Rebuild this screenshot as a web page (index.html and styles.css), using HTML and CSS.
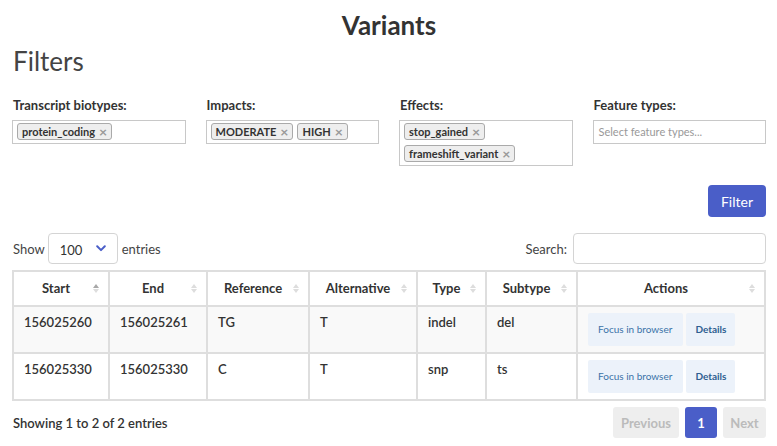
FILE: index.html
```html
<!DOCTYPE html>
<html lang="en">
<head>
<meta charset="utf-8">
<title>Variants</title>
<link rel="stylesheet" href="styles.css">
</head>
<body>
<div class="page">
  <h1 class="title">Variants</h1>
  <h2 class="section">Filters</h2>

  <div class="filters">
    <div class="filter">
      <div class="filter-label">Transcript biotypes:</div>
      <div class="multi">
        <span class="tag">protein_coding<span class="tag-x">×</span></span>
      </div>
    </div>
    <div class="filter">
      <div class="filter-label">Impacts:</div>
      <div class="multi">
        <span class="tag">MODERATE<span class="tag-x">×</span></span>
        <span class="tag">HIGH<span class="tag-x">×</span></span>
      </div>
    </div>
    <div class="filter">
      <div class="filter-label">Effects:</div>
      <div class="multi">
        <span class="tag">stop_gained<span class="tag-x">×</span></span>
        <span class="tag">frameshift_variant<span class="tag-x">×</span></span>
      </div>
    </div>
    <div class="filter">
      <div class="filter-label">Feature types:</div>
      <div class="multi">
        <span class="placeholder">Select feature types...</span>
      </div>
    </div>
  </div>

  <div class="filter-actions">
    <button class="btn-primary">Filter</button>
  </div>

  <div class="dt-top">
    <div class="dt-length">
      <span>Show</span>
      <div class="select">
        <span>100</span>
        <svg class="chevron" width="10" height="7" viewBox="0 0 10 7"><path d="M1.2 1.3 L5 5.1 L8.8 1.3" fill="none" stroke="#4a5ec8" stroke-width="2" stroke-linecap="round" stroke-linejoin="round"/></svg>
      </div>
      <span>entries</span>
    </div>
    <div class="dt-search">
      <span>Search:</span>
      <div class="search-input"></div>
    </div>
  </div>

  <table class="dt">
    <colgroup>
      <col class="c-start"><col class="c-end"><col class="c-ref"><col class="c-alt"><col class="c-type"><col class="c-sub"><col class="c-act">
    </colgroup>
    <thead>
      <tr>
        <th>Start<span class="sort asc"><i class="up"></i><i class="down"></i></span></th>
        <th>End<span class="sort"><i class="up"></i><i class="down"></i></span></th>
        <th>Reference<span class="sort"><i class="up"></i><i class="down"></i></span></th>
        <th>Alternative<span class="sort"><i class="up"></i><i class="down"></i></span></th>
        <th>Type<span class="sort"><i class="up"></i><i class="down"></i></span></th>
        <th>Subtype<span class="sort"><i class="up"></i><i class="down"></i></span></th>
        <th>Actions<span class="sort"><i class="up"></i><i class="down"></i></span></th>
      </tr>
    </thead>
    <tbody>
      <tr class="odd">
        <td>156025260</td><td>156025261</td><td>TG</td><td>T</td><td>indel</td><td>del</td>
        <td class="actions"><span class="btn-light">Focus in browser</span><span class="btn-light strong">Details</span></td>
      </tr>
      <tr>
        <td>156025330</td><td>156025330</td><td>C</td><td>T</td><td>snp</td><td>ts</td>
        <td class="actions"><span class="btn-light">Focus in browser</span><span class="btn-light strong">Details</span></td>
      </tr>
    </tbody>
  </table>

  <div class="dt-bottom">
    <div class="dt-info">Showing 1 to 2 of 2 entries</div>
    <div class="pager">
      <span class="page-btn disabled prev">Previous</span>
      <span class="page-btn current">1</span>
      <span class="page-btn disabled next">Next</span>
    </div>
  </div>
</div>
</body>
</html>
```
FILE: styles.css
```css
* { box-sizing: border-box; }

body {
  margin: 0;
  font-family: Lato, "Open Sans", sans-serif;
  color: #333;
  background: #fff;
}

.page {
  padding: 0 11px 0 12px;
}

.title {
  margin: 0;
  padding-top: 9px;
  font-size: 26px;
  line-height: 32px;
  font-weight: 700;
  text-align: center;
  color: #333;
}

.section {
  margin: 4px 0 0 1px;
  font-size: 26px;
  line-height: 32px;
  font-weight: 400;
  color: #444;
}

.filters {
  margin-top: 20px;
  display: grid;
  grid-template-columns: repeat(4, 1fr);
  column-gap: 20px;
  align-items: start;
}

.filter-label {
  font-size: 13px;
  line-height: 17px;
  font-weight: 700;
  color: #333;
  margin: 0 0 6px 1px;
}

.multi {
  border: 1px solid #c8c8c8;
  min-height: 24px;
  padding: 2px 4px 3px;
  display: flex;
  flex-wrap: wrap;
  gap: 5px 4px;
  align-items: center;
  background: #fff;
}

.tag {
  display: inline-flex;
  align-items: center;
  height: 17px;
  padding: 0 4px 0 4px;
  border: 1px solid #aaa;
  border-radius: 3px;
  background: #eee;
  font-size: 11px;
  font-weight: 700;
  color: #333;
  white-space: nowrap;
}

.tag-x {
  margin-left: 4px;
  color: #999;
  font-size: 14px;
  line-height: 14px;
  font-weight: 700;
}

.placeholder {
  font-size: 11px;
  color: #999;
  line-height: 17px;
  padding-left: 1px;
}

.filter-actions {
  display: flex;
  justify-content: flex-end;
  margin-top: 19px;
}

.btn-primary {
  height: 32px;
  width: 58px;
  border: none;
  border-radius: 4px;
  background: #4a5ec8;
  color: #fff;
  font-family: inherit;
  font-size: 14px;
  padding: 0;
}

.dt-top {
  margin-top: 16px;
  display: flex;
  justify-content: space-between;
  align-items: center;
  font-size: 13px;
  color: #444;
}

.dt-length {
  display: flex;
  align-items: center;
  gap: 4px;
  padding-left: 1px;
}

.select {
  width: 70px;
  height: 31px;
  border: 1px solid #d4d4d4;
  border-radius: 4px;
  display: flex;
  align-items: center;
  justify-content: space-between;
  padding: 3px 11px 0 11px;
  color: #333;
  margin-left: -1px;
}

.chevron { margin-top: -3px; }

.dt-search {
  display: flex;
  align-items: center;
  gap: 6px;
}

.search-input {
  width: 193px;
  height: 31px;
  border: 1px solid #d4d4d4;
  border-radius: 4px;
}

.dt {
  margin-top: 6px;
  width: 100%;
  border-collapse: collapse;
  table-layout: fixed;
  font-size: 13px;
}

.c-start { width: 96px; }
.c-end { width: 98px; }
.c-ref { width: 102px; }
.c-alt { width: 108px; }
.c-type { width: 69px; }
.c-sub { width: 91px; }
.c-act { width: auto; }

.dt th,
.dt td {
  border: 2px solid #dedede;
}

.dt th {
  position: relative;
  padding: 8px 20px 8px 10px;
  line-height: 17px;
  font-weight: 700;
  text-align: center;
  color: #333;
}

.dt td {
  padding: 7px 10px;
  line-height: 17px;
  font-weight: 600;
  vertical-align: top;
  color: #333;
  height: 47px;
}

.dt tr.odd td { background: #f9f9f9; }

.sort {
  position: absolute;
  right: 9px;
  top: 12px;
  display: flex;
  flex-direction: column;
  gap: 1px;
}

.sort i {
  display: block;
  width: 0;
  height: 0;
  border-left: 3px solid transparent;
  border-right: 3px solid transparent;
}

.sort .up { border-bottom: 4px solid #ddd; }
.sort .down { border-top: 4px solid #ddd; }
.sort.asc .up { border-bottom-color: #a8a8a8; }

.dt td.actions {
  padding: 6px 10px 5px;
  white-space: nowrap;
  font-size: 0;
}

.btn-light {
  display: inline-block;
  height: 33px;
  line-height: 33px;
  padding: 0 11px 0 10px;
  background: #ecf2fa;
  color: #3b73a8;
  font-size: 10px;
  font-weight: 400;
  border-radius: 2px;
  margin-right: 3px;
}

.btn-light.strong {
  font-weight: 700;
  color: #2e5f91;
  padding: 0 9px;
}

.dt-bottom {
  margin-top: 6px;
  display: flex;
  justify-content: space-between;
  align-items: center;
}

.dt-info {
  font-size: 13px;
  font-weight: 600;
  color: #333;
  padding-left: 1px;
}

.pager {
  display: flex;
  gap: 6px;
}

.page-btn {
  display: inline-flex;
  align-items: center;
  justify-content: center;
  height: 31px;
  border-radius: 3px;
  font-size: 13px;
  font-weight: 700;
}

.page-btn.disabled {
  background: #eee;
  color: #bbb;
}

.page-btn.prev { width: 66px; }
.page-btn.next { width: 43px; }

.page-btn.current {
  width: 32px;
  background: #4a5ec8;
  color: #fff;
}
```
